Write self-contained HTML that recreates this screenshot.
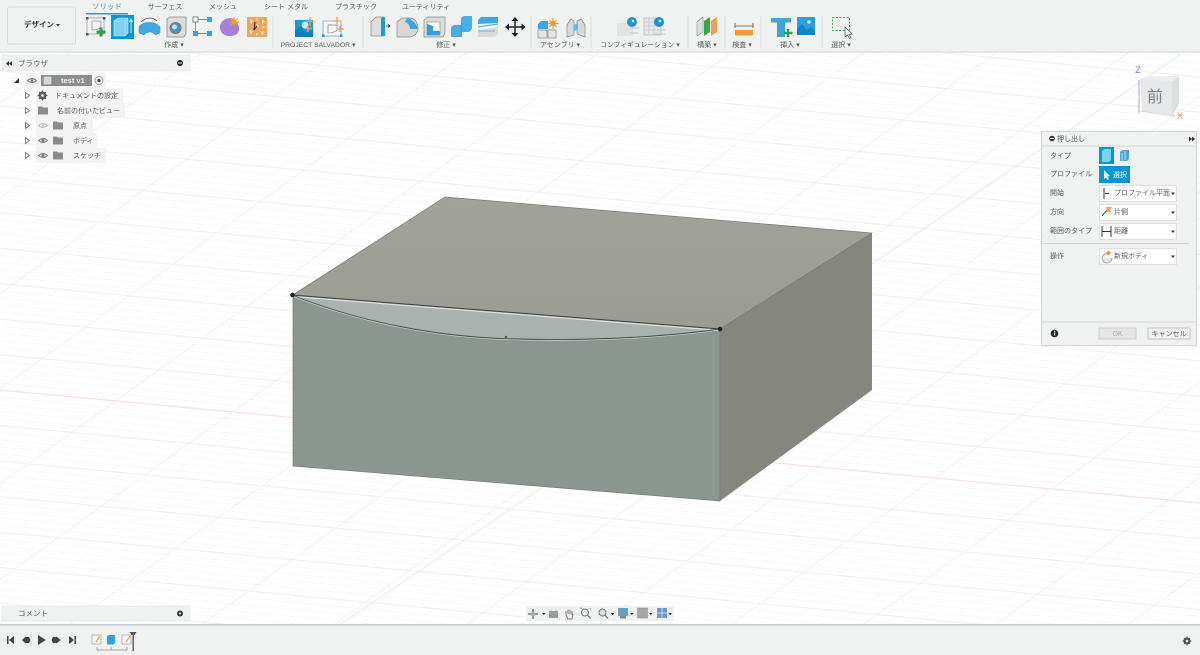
<!DOCTYPE html>
<html lang="ja"><head><meta charset="utf-8"><title>Fusion 360</title>
<style>
html,body{margin:0;padding:0;width:1200px;height:655px;overflow:hidden;background:#fff}
svg{display:block;position:absolute;left:0;top:0}
text{font-family:"Liberation Sans","Noto Sans CJK JP",sans-serif;font-size:7px;fill:#5c5c5c}
.c{text-anchor:middle}
.d{fill:#333}
.ui{filter:blur(.3px)}
</style></head><body>
<svg width="1200" height="655" viewBox="0 0 1200 655" xmlns="http://www.w3.org/2000/svg">
<defs>
<pattern id="g" width="100" height="100" patternUnits="userSpaceOnUse" patternTransform="matrix(1.17 .11 -.436 .314 583.5 445)">
<g stroke="#f8f8f8" fill="none">
<path stroke-width="2.4" d="M0 20H100M0 40H100M0 60H100M0 80H100"/>
<path stroke-width=".8" d="M20 0V100M40 0V100M60 0V100M80 0V100"/>
</g>
<path stroke="#efefef" stroke-width="3" d="M0 0H100M0 100H100"/>
<path stroke="#eeeeee" stroke-width="1" d="M0 0V100M100 0V100"/>
</pattern>
<linearGradient id="top" x1="0" y1="0" x2="0" y2="1"><stop offset="0" stop-color="#a1a299"/><stop offset="1" stop-color="#9b9c93"/></linearGradient>
</defs>
<rect width="1200" height="655" fill="#fff"/>
<rect y="52" width="1200" height="575" fill="url(#g)"/>
<!-- axes -->
<path d="M0 390L1200 503" stroke="#fbdcdc" stroke-width="1"/>
<path d="M1180 55L310 645" stroke="#daf5da" stroke-width="1"/>

<!-- box -->
<polygon points="293,295 720,329 720,501 293,466" fill="#8b9691"/>
<polygon points="292,295 445,197 872,233 720,329" fill="url(#top)"/>
<polygon points="720,329 872,233 872,390 720,501" fill="#85877f"/>
<path d="M292 295C360 322 440 338 520 339C600 341 670 336 720 329Z" fill="#a9b2af"/>
<path d="M293 295L445 197L872 233L720 329V501L293 466V295" fill="none" stroke="#767b77" stroke-width=".7"/>
<path d="M720 329L872 233" stroke="#7c7e76" stroke-width=".6"/>
<path d="M292 296.500L720 330.500" stroke="#e4e6e4" stroke-width="1"/>
<path d="M292 295L720 329" stroke="#3b3f3d" stroke-width="1"/>
<path d="M292 295C360 322 440 338 520 339C600 341 670 336 720 329" fill="none" stroke="#4a4f4d" stroke-width=".9"/>
<path d="M292 296C360 323 440 339 520 340C600 342 670 337 720 330" fill="none" stroke="#d8dcda" stroke-width=".6"/>
<circle cx="292.500" cy="295" r="2.300" fill="#1e2322"/>
<circle cx="720" cy="329" r="2.300" fill="#1e2322"/>
<circle cx="506" cy="337" r="1.300" fill="#5a5f5d"/>

<g class="ui">
<!-- toolbar -->
<rect width="1200" height="51" fill="#f0f1f1"/>
<rect y="51" width="1200" height="2" fill="#e3e4e4"/>
<rect x="7.500" y="7" width="68" height="37" rx="2" fill="#f0f1f1" stroke="#d9d9d9"/>
<text x="39" y="27" class="c d" style="font-size:7.500px;font-weight:bold">デザイン</text>
<path d="M56 24h4l-2 2.500z" fill="#333"/>
<text x="107" y="9" class="c" style="fill:#2b9bd8;font-size:7.500px">ソリッド</text>
<rect x="86" y="13" width="42" height="1.500" fill="#2b9bd8"/>
<g>
<text x="165" y="9" class="c">サーフェス</text>
<text x="223" y="9" class="c">メッシュ</text>
<text x="286" y="9" class="c">シート メタル</text>
<text x="356" y="9" class="c">プラスチック</text>
<text x="426" y="9" class="c">ユーティリティ</text>
</g>
<g>
<text x="174" y="47" class="c">作成 ▾</text>
<text x="318" y="47" class="c" style="font-size:6.800px">PROJECT SALVADOR ▾</text>
<text x="446" y="47" class="c">修正 ▾</text>
<text x="560" y="47" class="c">アセンブリ ▾</text>
<text x="640" y="47" class="c" style="font-size:6.800px">コンフィギュレーション ▾</text>
<text x="707" y="47" class="c">構築 ▾</text>
<text x="742" y="47" class="c">検査 ▾</text>
<text x="790" y="47" class="c">挿入 ▾</text>
<text x="841" y="47" class="c">選択 ▾</text>
</g>
<path d="M273 16V48M363 16V48M531 16V48M591 16V48M688 16V48M725 16V48M761 16V48M822 16V48" stroke="#dcdcdc"/>

<!-- create sketch -->
<rect x="87" y="18" width="17" height="16" fill="#f5f5f5" stroke="#8a8a8a" stroke-width=".7"/>
<path d="M92 21H101V26C100 29 97 30 92 30Z" fill="none" stroke="#999" stroke-width=".8"/>
<path d="M86 17h2.500v2.500H86zM103 17h2.500v2.500H103zM86 33h2.500v2.500H86z" fill="#555"/>
<path d="M101 27.500V36.500M96.500 32H105.500" stroke="#2e9e4f" stroke-width="3"/>
<!-- extrude -->
<rect x="111" y="15" width="23" height="24" fill="#0696d7"/>
<path d="M114 21L118 18H128V33L125 36H114Z" fill="#7fd0f3" stroke="#d5f0fb" stroke-width=".6"/>
<path d="M114 21H125V36M125 21L128 18" fill="none" stroke="#bde7f9" stroke-width=".6"/>
<path d="M131 33V20M129.500 22L131 19L132.500 22" stroke="#fff" stroke-width=".8" fill="none"/>
<!-- revolve -->
<path d="M139 27C142 21 156 21 160 27V33L155 35C153 31 147 31 144 35L139 33Z" fill="#3fa9e0" stroke="#2a87bc" stroke-width=".5"/>
<path d="M141 22C146 17 153 17 157 21" fill="none" stroke="#444" stroke-width=".8"/>
<!-- hole -->
<path d="M167 19L170 17H186V33L184 37H167Z" fill="#dcdcdc" stroke="#888" stroke-width=".8"/>
<circle cx="175.500" cy="28" r="5.500" fill="#4f94bb" stroke="#777"/>
<circle cx="174.500" cy="27" r="2.500" fill="#c7dfeb"/>
<!-- pattern -->
<rect x="193" y="17" width="5" height="5" fill="#fff" stroke="#666" stroke-width=".8"/>
<rect x="207" y="17" width="5" height="5" fill="#39a5df"/>
<rect x="193" y="31" width="5" height="5" fill="#39a5df"/>
<rect x="207" y="31" width="5" height="5" fill="#39a5df"/>
<path d="M198 19.500H207M198 33.500H207M195.500 22V31" stroke="#666" stroke-width=".7"/>
<!-- purple -->
<path d="M220 27C220 21 226 18 231 18C236 19 239 24 239 29C239 33 236 36 230 36C224 36 220 33 220 27Z" fill="#a77fd8"/>
<path d="M234 17V27M229 22H239M230.500 18.500L237.500 25.500M237.500 18.500L230.500 25.500" stroke="#f39c2c" stroke-width="1"/>
<circle cx="234" cy="22" r="2.600" fill="#f39c2c"/>
<!-- orange -->
<rect x="247" y="17" width="20" height="20" fill="#eca65b"/>
<path d="M250 19l3 2-2 3zM262 19l3 3-3 2zM249 30l4 1-2 4zM260 31l5 1-3 3zM256 24l3 1-1 3zM253 26l2 1-1 2zM262 26l3 1-2 2zM256 33l2 1-2 2zM256 18l2 1-1 2z" fill="#f6e7d4"/>
<path d="M255 22L254 30M254 30L257 26" stroke="#333" stroke-width="1.200"/>

<!-- project -->
<rect x="295" y="20" width="18" height="17" fill="#1598d8"/>
<path d="M295 37V31L301 26L307 33L313 30V37Z" fill="#0c80bd"/>
<circle cx="305" cy="25" r="3.500" fill="#cfe9f5"/>
<path d="M310 17V26M306 21.500H314.500M308 25V32M305 28.500H312" stroke="#f2a24b" stroke-width="1.400"/>
<rect x="323" y="21" width="18" height="15" fill="#f7f7f7" stroke="#7aa9c9" stroke-width=".8"/>
<path d="M328 25H337V30C335 32 332 33 328 33Z" fill="none" stroke="#888" stroke-width=".7"/>
<path d="M337 17V25M333 21H341M340 26V32M337 29H344" stroke="#ee9f55" stroke-width="1.300"/>
<rect x="322" y="34.500" width="2.500" height="2.500" fill="#1598d8"/><rect x="340" y="34.500" width="2.500" height="2.500" fill="#1598d8"/>

<!-- press pull -->
<path d="M371 22L376 17H384V36H371Z" fill="#dedede" stroke="#888" stroke-width=".7"/>
<path d="M381 18L385 17V36H381Z" fill="#1f9ad9"/>
<path d="M386 26H390M388 24.500L390 26L388 27.500" stroke="#333" stroke-width=".8" fill="none"/>
<!-- fillet -->
<path d="M397 22L402 18H410C414 18 418 22 418 28C418 33 414 37 409 37H397Z" fill="#d7d7d7" stroke="#888" stroke-width=".7"/>
<path d="M407 18C412 19 417 24 418 29L410 29C410 25 408 23 405 22Z" fill="#3ba6e0"/>
<!-- shell -->
<path d="M424 20L428 17H445V33L443 37H424Z" fill="#dcdcdc" stroke="#888" stroke-width=".7"/>
<rect x="427" y="22" width="13" height="13" fill="#f8f8f8" stroke="#888" stroke-width=".6"/>
<path d="M427 24L433 26V31H440V35H427Z" fill="#2e9fdc"/>
<!-- combine -->
<path d="M451 27L454 25H461V18L464 16H472V29L469 32H462V37H451Z" fill="#47aee6"/>
<path d="M461 25V32" stroke="#2a8cc4" stroke-width=".6"/>
<!-- split -->
<path d="M478 20L481 17H498V23L478 24Z" fill="#3da7e0"/>
<path d="M478 27L498 24" stroke="#3da7e0" stroke-width="1"/>
<path d="M478 30L498 27V33L495 37H478Z" fill="#dadada"/>
<path d="M478 29L498 26" stroke="#fff" stroke-width="1"/>
<path d="M478 31H495" stroke="#3da7e0" stroke-width=".8"/>
<!-- move -->
<path d="M515 18V36M506 27H525" stroke="#222" stroke-width="1.500"/>
<path d="M515 17l-3.500 4h7zM515 37l-3.500-4h7zM505 27l4-3.500v7zM525.500 27l-4-3.500v7z" fill="#222"/>

<!-- assembly -->
<path d="M538 24L541 21H548V29H538Z" fill="#3ba6e0"/>
<path d="M538 30H547V38H538ZM548 30H556V38H548Z" fill="#e4e4e4" stroke="#888" stroke-width=".7"/>
<path d="M553 18V29M547.500 23.500H558.500M549.500 20L556.500 27M556.500 20L549.500 27" stroke="#f39c2c" stroke-width="1"/>
<circle cx="553" cy="23.500" r="2.800" fill="#f39c2c"/>
<path d="M567 25L571 19L574 21V35L567 37ZM577 21L581 19L585 25V37L577 34Z" fill="#d8d8d8" stroke="#888" stroke-width=".7"/>
<path d="M574 25L578 23V29L574 31Z" fill="#6cb5de"/>

<!-- config -->
<rect x="617" y="23" width="16" height="13" fill="#e3e3e3"/>
<path d="M630 28H639M630 33H639" stroke="#b9c9d2" stroke-width="1"/>
<circle cx="632" cy="22" r="5" fill="#1b95d6"/>
<circle cx="633" cy="21" r="1.300" fill="#fff"/>
<rect x="644" y="18" width="17" height="17" fill="#e8e8e8" stroke="#aaa" stroke-width=".6"/>
<path d="M644 22H661M644 26H661M644 30H661M649 18V35M654 18V35" stroke="#b5b5b5" stroke-width=".5"/>
<circle cx="659" cy="22" r="5" fill="#1b95d6"/>
<circle cx="660" cy="21" r="1.300" fill="#fff"/>
<path d="M655 30H665M655 34H665" stroke="#b9c9d2" stroke-width="1"/>

<!-- plane -->
<path d="M697 22L703 17V32L697 36Z" fill="#e0e0e0" stroke="#888" stroke-width=".6"/>
<path d="M704 21L710 17V32L704 36Z" fill="#38a351"/>
<path d="M711 21L717 17V32L711 36Z" fill="#ef9f55"/>
<!-- measure -->
<rect x="735" y="30" width="18" height="5.500" fill="#f0993a"/>
<path d="M735 26H753M735 23V28M753 23V28" stroke="#555" stroke-width=".8"/>
<!-- insert -->
<path d="M771 18H791V22.500H785V37H777V22.500H771Z" fill="#3ba6dc"/>
<path d="M788 29V37M784 33H792.500" stroke="#2e9e4f" stroke-width="2.400"/>
<rect x="797" y="17" width="18" height="18" fill="#2aa1df"/>
<path d="M797 35V29L802 24L807 30L811 27L815 31V35Z" fill="#1484c2"/>
<circle cx="809" cy="22" r="1.800" fill="#e7edc0"/>
<!-- select -->
<rect x="832.500" y="17.500" width="17" height="13" fill="none" stroke="#3fa86a" stroke-dasharray="2 1.500"/>
<path d="M845 27L845 37L847.500 35L849.500 38.500L851 37.500L849 34.500L852 34Z" fill="#fff" stroke="#444" stroke-width=".7"/>

<!-- browser -->
<rect x="2" y="55" width="188" height="16" fill="#f0f1f1" stroke="#e2e2e2" stroke-width=".5"/>
<path d="M9 61l-3 2.500 3 2.500zM12 61l-3 2.500 3 2.500z" fill="#333"/>
<text x="18" y="66" style="font-size:7.500px">ブラウザ</text>
<circle cx="180" cy="63" r="3" fill="#222"/><rect x="178" y="62.500" width="4" height="1" fill="#fff"/>
<path d="M19 78V83H14Z" fill="#333"/>
<rect x="25" y="73" width="81" height="15" fill="#f3f3f3"/>
<rect x="41" y="75" width="51" height="11" fill="#8d8d8d"/>
<rect x="44" y="77" width="7" height="7" fill="#c8d8e4" stroke="#eee" stroke-width=".5"/>
<text x="61" y="83" style="fill:#f4f4f4;font-weight:bold;font-size:7.500px">test v1</text>
<circle cx="99" cy="80.500" r="4" fill="#eee" stroke="#888" stroke-width=".7"/>
<circle cx="99" cy="80.500" r="1.600" fill="#345"/>
<rect x="36" y="88" width="87" height="15" fill="#f3f3f3"/>
<rect x="36" y="103" width="89" height="15" fill="#f3f3f3"/>
<rect x="36" y="118" width="57" height="15" fill="#f3f3f3"/>
<rect x="36" y="133" width="61" height="15" fill="#f3f3f3"/>
<rect x="36" y="148" width="70" height="15" fill="#f3f3f3"/>
<g fill="none" stroke="#777" stroke-width=".9">
<path d="M27.500 80.500Q32 76.500 36.500 80.500Q32 84.500 27.500 80.500Z"/>
<path d="M38.500 125.500Q43 121.500 47.500 125.500Q43 129.500 38.500 125.500Z" stroke="#bbb"/>
<path d="M38.500 140.500Q43 136.500 47.500 140.500Q43 144.500 38.500 140.500Z"/>
<path d="M38.500 155.500Q43 151.500 47.500 155.500Q43 159.500 38.500 155.500Z"/>
</g>
<circle cx="32" cy="80.500" r="1.400" fill="#777"/>
<circle cx="43" cy="140.500" r="1.500" fill="#777"/><circle cx="43" cy="155.500" r="1.500" fill="#777"/><circle cx="43" cy="125.500" r="1.300" fill="#ccc"/>
<g fill="#fff" stroke="#666" stroke-width=".8">
<path d="M25.500 92.500V98.500L29.500 95.500Z"/><path d="M25.500 107.500V113.500L29.500 110.500Z"/><path d="M25.500 122.500V128.500L29.500 125.500Z"/><path d="M25.500 137.500V143.500L29.500 140.500Z"/><path d="M25.500 152.500V158.500L29.500 155.500Z"/>
</g>
<circle cx="42.500" cy="95.500" r="3" fill="none" stroke="#555" stroke-width="2"/>
<path d="M42.500 90.500V100.500M37.500 95.500H47.500M39 92L46 99M46 92L39 99" stroke="#555" stroke-width="1"/>
<circle cx="42.500" cy="95.500" r="1.300" fill="#f3f3f3"/>
<g fill="#8c8c8c">
<path d="M38 106.500H42L43 107.500H48V114.500H38Z"/>
<path d="M53 121.500H57L58 122.500H63V129.500H53Z"/>
<path d="M53 136.500H57L58 137.500H63V144.500H53Z"/>
<path d="M53 151.500H57L58 152.500H63V159.500H53Z"/>
</g>
<text x="55" y="98">ドキュメントの設定</text>
<text x="57" y="113">名前の付いたビュー</text>
<text x="73" y="128">原点</text>
<text x="73" y="143">ボディ</text>
<text x="73" y="158">スケッチ</text>

<!-- viewcube -->
<path d="M1139 80V113" stroke="#a5a4e0"/>
<path d="M1141 111L1175 116" stroke="#f4c4a4" stroke-width="1.200"/>
<path d="M1140 79L1146 77H1179V104L1172 116L1142 111Z" fill="#e6e7e8"/>
<path d="M1172 82L1179 77V104L1172 116Z" fill="#dddedf"/>
<path d="M1140 79L1146 76H1179L1173 81Z" fill="#eeeeef"/>
<text x="1155" y="102" class="c" style="font-size:16px;fill:#808080">前</text>
<text x="1138" y="73" class="c" style="font-size:9px;fill:#7a78d2">Z</text>
<text x="1180" y="119" class="c" style="font-size:9px;fill:#ef8a58">X</text>

<!-- extrude panel -->
<rect x="1041.500" y="131.500" width="155" height="214" fill="#f0f1f1" stroke="#d5d5d5"/>
<path d="M1042 146H1196M1042 322H1196" stroke="#d8d8d8"/>
<circle cx="1052" cy="138.500" r="2.800" fill="#333"/><rect x="1050" y="138" width="4" height="1" fill="#fff"/>
<text x="1057" y="141">押し出し</text>
<path d="M1189 136.500l3 2.500-3 2.500zM1192 136.500l3 2.500-3 2.500z" fill="#333"/>
<g>
<text x="1050" y="158">タイプ</text>
<text x="1050" y="176">プロファイル</text>
<text x="1050" y="195">開始</text>
<text x="1050" y="214">方向</text>
<text x="1050" y="233">範囲のタイプ</text>
<text x="1050" y="258">操作</text>
</g>
<rect x="1099" y="147" width="15" height="17" fill="#0696d7"/>
<path d="M1102 151L1104 149H1111V160L1109 162H1102Z" fill="#7fd0f3"/>
<path d="M1120 152L1123 150H1129V159L1127 161H1120Z" fill="#4aa6d8"/>
<path d="M1122 153V161M1125 151V160" stroke="#e8f3f9" stroke-width=".7"/>
<rect x="1099" y="166" width="31" height="17" fill="#0696d7"/>
<path d="M1104 170V179L1106 177.500L1107.500 180L1109 179L1107.500 176.500L1110 176Z" fill="#e9f3f8"/>
<text x="1113" y="177" style="fill:#fff">選択</text>
<g fill="#fff" stroke="#dedede">
<rect x="1099.500" y="185.500" width="77" height="16"/>
<rect x="1099.500" y="204.500" width="77" height="16"/>
<rect x="1099.500" y="223.500" width="77" height="16"/>
<rect x="1099.500" y="248.500" width="77" height="16"/>
</g>
<path d="M1104 188V199M1105 193.500H1109" stroke="#333" stroke-width="1"/>
<text x="1114" y="195">プロファイル平面</text>
<path d="M1102 216L1108 209" stroke="#555"/><path d="M1106 207H1112L1110 210L1112 212H1107Z" fill="#f0a56a"/>
<text x="1114" y="214">片側</text>
<path d="M1102 226V237M1111 226V237M1102 231.500H1111" stroke="#334" stroke-width="1"/>
<text x="1114" y="233">距離</text>
<path d="M1102 258a5 5 0 1 0 10 0" fill="#e8e8e8" stroke="#888" stroke-width=".7"/>
<path d="M1102 258a5 5 0 0 1 7-4" fill="#e8e8e8" stroke="#888" stroke-width=".7"/>
<circle cx="1108.500" cy="253" r="2" fill="#f09a2e"/>
<text x="1114" y="258">新規ボディ</text>
<g fill="#333">
<path d="M1171 192.500h4l-2 2.500z"/><path d="M1171 211.500h4l-2 2.500z"/><path d="M1171 230.500h4l-2 2.500z"/><path d="M1171 255.500h4l-2 2.500z"/>
</g>
<path d="M1043 243.500H1189" stroke="#cfcfcf"/>
<circle cx="1054.500" cy="333.500" r="3.800" fill="#222"/><rect x="1054" y="332.500" width="1.200" height="3" fill="#fff"/><rect x="1054" y="330.700" width="1.200" height="1.100" fill="#fff"/>
<rect x="1099" y="328" width="37" height="11" fill="#e5e5e5" stroke="#cecece"/>
<text x="1117.500" y="336" class="c" style="fill:#aaa">OK</text>
<rect x="1148" y="328" width="42" height="11" fill="#f2f2f2" stroke="#c4c4c4"/>
<text x="1169" y="336" class="c">キャンセル</text>

<!-- comments -->
<rect x="2" y="606" width="188" height="15" fill="#f0f1f1" stroke="#e2e2e2" stroke-width=".5"/>
<text x="18" y="616" style="font-size:7.500px">コメント</text>
<circle cx="180" cy="613.500" r="3" fill="#333"/><circle cx="180" cy="613.500" r="1" fill="#fff"/>

<!-- nav bar -->
<rect x="526" y="606" width="148" height="15" fill="#f0f1f1"/>
<path d="M533 609V619M528 614H538" stroke="#777" stroke-width="1.500"/><circle cx="533" cy="614" r="2.300" fill="#aaa"/>
<path d="M542 613h3.500l-1.750 2.200z" fill="#333"/>
<rect x="549" y="611" width="9" height="7" fill="#999"/><path d="M549 613.500H558M551 609.500V611M556 609.500V611" stroke="#aaa" stroke-width=".7"/>
<path d="M566 615V611M568 614V609.500M570 614V609.500M572 615V611M566 615L568 619H572L573 614" stroke="#777" fill="none"/>
<circle cx="585" cy="612.500" r="3.500" fill="none" stroke="#777"/><path d="M587.500 615L590.500 618.500" stroke="#777" stroke-width="1.300"/>
<path d="M590 608l.7 1.500M580 608h2" stroke="#777" stroke-width=".7"/>
<circle cx="602.500" cy="612.500" r="3.500" fill="#ddd" stroke="#777"/><path d="M605 615L608 618.500" stroke="#777" stroke-width="1.300"/>
<path d="M611 613h3.500l-1.750 2.200z" fill="#333"/>
<rect x="618" y="608" width="10" height="8" fill="#6a9cc6"/><rect x="620" y="616" width="6" height="2.500" fill="#888"/>
<path d="M630 613h3.500l-1.750 2.200z" fill="#333"/>
<rect x="637.500" y="608" width="10" height="10" fill="#a8a8a8"/><rect x="637.500" y="608" width="10" height="10" fill="none" stroke="#888" stroke-width=".5"/>
<path d="M649 613h3.500l-1.750 2.200z" fill="#333"/>
<rect x="657" y="608" width="10" height="10" fill="#6a98cb"/><path d="M657 613H667M662 608V618" stroke="#dfe9f2" stroke-width=".8"/>
<path d="M668.500 613h3.500l-1.750 2.200z" fill="#333"/>

<!-- timeline -->
<rect y="624" width="1200" height="31" fill="#f0f1f1"/>
<rect y="624" width="1200" height="1.500" fill="#c9c9c9"/>
<g fill="#444">
<path d="M7 636h1.500v8H7zM14 636v8l-5-4z"/>
<path d="M22 640l3.500-3.500v7zM25.500 637h3.500v6h-3.500zM29 637l0 6 1.500-3z"/>
<path d="M38 635v10l8-5z"/>
<path d="M53 637h3.500v6H53zM56.500 636.500l4 3.500-4 3.500zM53 637v6l-1.500-3z"/>
<path d="M69 636v8l5-4zM74.500 636H76v8h-1.500z"/>
</g>
<rect x="92" y="635" width="9" height="9" fill="#f4f4f4" stroke="#9aa" stroke-width=".7"/>
<path d="M100 636l-4 6" stroke="#ee9f55" stroke-width="1.200"/>
<path d="M107 636l2-1h6v8l-1.500 1.500H107Z" fill="#2fa2df"/>
<rect x="122" y="635" width="9" height="9" fill="#f4f4f4" stroke="#9aa" stroke-width=".7"/>
<path d="M130 636l-4 6" stroke="#ee9f55" stroke-width="1.200"/>
<path d="M97 647V650H127V647M111 647V650" fill="none" stroke="#888" stroke-width=".7"/>
<path d="M129.500 632h7l-2 3h-3z" fill="#555"/>
<rect x="132.500" y="633" width="1.500" height="18" fill="#666"/>
<circle cx="1187" cy="641" r="2.600" fill="none" stroke="#555" stroke-width="2"/>
<path d="M1187 636.500V645.500M1182.500 641H1191.500M1184 638L1190 644M1190 638L1184 644" stroke="#555" stroke-width="1"/>
<circle cx="1187" cy="641" r="1.200" fill="#f0f1f1"/>
</g>
</svg>
</body></html>
